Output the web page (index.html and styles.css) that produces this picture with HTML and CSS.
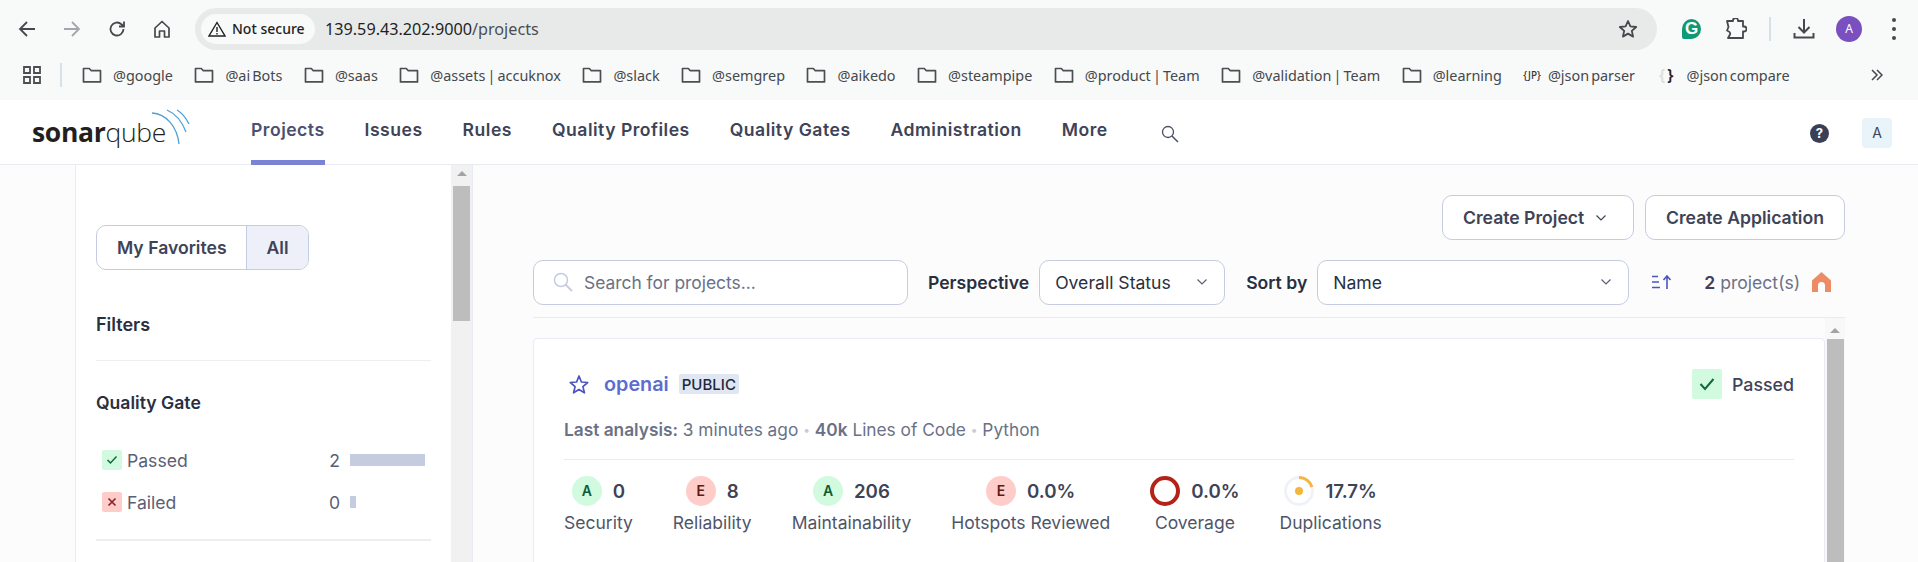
FILE: index.html
```html
<!DOCTYPE html>
<html lang="en">
<head>
    <meta charset="UTF-8">
    <meta name="viewport" content="width=device-width, initial-scale=1.0">
    <link rel="stylesheet" href="styles.css">
    <title>Projects - SonarQube</title>
</head>
<body>
<svg class="defs" width="0" height="0">
    <symbol id="folder" viewBox="0 0 20 18"><path d="M1.5 2.5h5.8l2 2.2h9.2v11.2h-17z" fill="none" stroke="#4b4e52" stroke-width="1.7" stroke-linejoin="round"/></symbol>
    <symbol id="chev" viewBox="0 0 12 8"><path d="M1.5 1.5L6 6l4.500-4.500" fill="none" stroke="currentColor" stroke-width="1.200"/></symbol>
</svg>

<!-- browser toolbar -->
<div class="browser-bar">
    <svg class="tb-icon first" viewBox="0 0 18 18"><path d="M17 9H2M9 2L2 9l7 7" fill="none" stroke="#45484c" stroke-width="1.8"/></svg>
    <svg class="tb-icon" viewBox="0 0 18 18"><path d="M1 9h15M9 2l7 7-7 7" fill="none" stroke="#a4a7aa" stroke-width="1.8"/></svg>
    <svg class="tb-icon" viewBox="0 0 18 18"><path d="M15.500 9a6.500 6.500 0 1 1-2-4.700L16 6.500M16 1.500v5h-5" fill="none" stroke="#45484c" stroke-width="1.8"/></svg>
    <svg class="tb-icon" viewBox="0 0 18 18"><path d="M2 8l7-6.500L16 8v9h-4.500v-6h-5v6H2z" fill="none" stroke="#45484c" stroke-width="1.700" stroke-linejoin="round"/></svg>
    <div class="omnibox">
        <div class="not-secure">
            <svg width="18" height="16" viewBox="0 0 18 16"><path d="M9 1.500L17 15H1zM9 6v5M9 12v1.500" fill="none" stroke="#222" stroke-width="1.400"/></svg>
            <span>Not secure</span>
        </div>
        <span class="url">139.59.43.202:9000<span class="url-path">/projects</span></span>
        <svg class="star" width="20" height="20" viewBox="0 0 20 20"><path d="M10 2l2.400 5.400 5.800.6-4.400 3.900 1.300 5.700L10 14.600l-5.100 3 1.300-5.700L1.800 8l5.800-.6z" fill="none" stroke="#45484c" stroke-width="1.800" stroke-linejoin="round"/></svg>
    </div>
    <span class="grammarly">G</span>
    <svg class="puzzle" width="22" height="22" viewBox="0 0 22 22"><path d="M2 3h6V2.500a2.500 2.500 0 0 1 5 0V3h5v5.500h1a2.500 2.500 0 0 1 0 5h-1V20H3l2-3.500c.8-2-.8-3-2-3.500l-1-.5L3.500 9z" fill="none" stroke="#45484c" stroke-width="1.800" stroke-linejoin="round"/></svg>
    <span class="tb-sep"></span>
    <svg class="download" width="22" height="22" viewBox="0 0 22 22"><path d="M11 1v13M5.500 9l5.500 5.500L16.500 9M1.500 15v4.500h19V15" fill="none" stroke="#45484c" stroke-width="2"/></svg>
    <span class="profile">A</span>
    <span class="dots"><i></i><i></i><i></i></span>
</div>

<!-- bookmarks -->
<div class="bookmarks">
    <svg class="apps" width="18" height="18" viewBox="0 0 18 18"><path d="M1 1h6v6H1zM11 1h6v6h-6zM1 11h6v6H1zM11 11h6v6h-6z" fill="none" stroke="#4b4e52" stroke-width="1.800"/></svg>
    <span class="bm-sep"></span>
    <a class="bm"><svg class="folder"><use href="#folder"/></svg>@google</a>
    <a class="bm"><svg class="folder"><use href="#folder"/></svg>@ai Bots</a>
    <a class="bm"><svg class="folder"><use href="#folder"/></svg>@saas</a>
    <a class="bm"><svg class="folder"><use href="#folder"/></svg>@assets | accuknox</a>
    <a class="bm"><svg class="folder"><use href="#folder"/></svg>@slack</a>
    <a class="bm"><svg class="folder"><use href="#folder"/></svg>@semgrep</a>
    <a class="bm"><svg class="folder"><use href="#folder"/></svg>@aikedo</a>
    <a class="bm"><svg class="folder"><use href="#folder"/></svg>@steampipe</a>
    <a class="bm"><svg class="folder"><use href="#folder"/></svg>@product | Team</a>
    <a class="bm"><svg class="folder"><use href="#folder"/></svg>@validation | Team</a>
    <a class="bm"><svg class="folder"><use href="#folder"/></svg>@learning</a>
    <a class="bm bm-json"><span class="jp">{JP}</span>@json parser</a>
    <a class="bm bm-json"><span class="brace"><i>{</i>}</span>@json compare</a>
    <svg class="more-bm" width="12" height="12" viewBox="0 0 12 12"><path d="M1 1l5 5-5 5M6 1l5 5-5 5" fill="none" stroke="#45484c" stroke-width="1.500"/></svg>
</div>

<!-- sonarqube header -->
<header class="top-nav">
    <div class="logo">
        <span class="logo-text"><b>sonar</b>qube</span>
        <svg class="logo-waves" width="40" height="42" viewBox="0 0 40 42"><path d="M2 4c14 1 25 13 27 31M17 1c9 4 15 11 19 22M27 1c5 3 9 8 12 14" fill="none" stroke="#4f9fd6" stroke-width="1.300"/></svg>
    </div>
    <nav class="nav-links">
        <a class="active">Projects</a>
        <a>Issues</a>
        <a>Rules</a>
        <a>Quality Profiles</a>
        <a>Quality Gates</a>
        <a>Administration</a>
        <a>More</a>
    </nav>
    <svg class="nav-search" width="18" height="18" viewBox="0 0 18 18"><circle cx="7" cy="7" r="5.500" fill="none" stroke="#4a4f63" stroke-width="1.300"/><path d="M11 11l6 6" stroke="#4a4f63" stroke-width="1.500"/></svg>
    <span class="help">?</span>
    <span class="user-box">A</span>
</header>

<div class="page">
    <aside class="sidebar">
        <div class="side-inner">
            <div class="toggle"><span>My Favorites</span><span class="on">All</span></div>
            <h2 class="filters">Filters</h2>
            <section class="facet">
                <h3>Quality Gate</h3>
                <div class="facet-row">
                    <span class="mini ok"><svg width="12" height="10" viewBox="0 0 12 10"><path d="M1.500 5l3 3 6-6.500" fill="none" stroke="#0e6b3c" stroke-width="1.500"/></svg></span>
                    <span class="facet-name">Passed</span>
                    <span class="facet-num">2</span>
                    <span class="facet-bar"><i class="full"></i></span>
                </div>
                <div class="facet-row">
                    <span class="mini bad"><svg width="10" height="10" viewBox="0 0 10 10"><path d="M1.500 1.500l7 7M8.500 1.500l-7 7" fill="none" stroke="#8b1e1e" stroke-width="1.600"/></svg></span>
                    <span class="facet-name">Failed</span>
                    <span class="facet-num">0</span>
                    <span class="facet-bar"><i class="tiny"></i></span>
                </div>
            </section>
        </div>
        <div class="scrollbar">
            <span class="arrow"></span>
            <span class="thumb"></span>
        </div>
    </aside>

    <main class="main">
        <div class="actions">
            <button class="btn btn-project">Create Project <svg class="chev"><use href="#chev"/></svg></button>
            <button class="btn">Create Application</button>
        </div>
        <div class="toolbar">
            <div class="search-box">
                <svg width="20" height="20" viewBox="0 0 20 20"><circle cx="8" cy="8" r="6.500" fill="none" stroke="#c5cce0" stroke-width="1.500"/><path d="M12.500 12.500l6.500 6.500" stroke="#c5cce0" stroke-width="1.800"/></svg>
                <span>Search for projects...</span>
            </div>
            <label class="tool-label persp">Perspective</label>
            <div class="select sel-persp">Overall Status <svg class="chev"><use href="#chev"/></svg></div>
            <label class="tool-label sort">Sort by</label>
            <div class="select sel-sort">Name <svg class="chev"><use href="#chev"/></svg></div>
            <svg class="sort-icon" width="21" height="14" viewBox="0 0 21 14"><path d="M0 1.500h6M0 7h7M0 12.500h8" stroke="#4b55c0" stroke-width="1.500"/><path d="M15 14V1.500M11.500 5L15 1l3.500 4" fill="none" stroke="#4b55c0" stroke-width="1.600"/></svg>
            <span class="count"><b>2</b> project(s)</span>
            <svg class="home" width="19" height="20" viewBox="0 0 19 20"><path d="M9.500 0L19 8.500V20h-6v-6.500a3.500 3.500 0 0 0-7 0V20H0V8.500z" fill="#ed8c64"/></svg>
        </div>

        <div class="list">
            <article class="card">
                <div class="card-head">
                    <svg class="fav" width="20" height="21" viewBox="0 0 20 21"><path d="M10 2l2.400 6 6.300.5-4.800 4.100 1.500 6.200L10 15.500l-5.400 3.300 1.500-6.200L1.300 8.500 7.600 8z" fill="none" stroke="#4b55c0" stroke-width="1.700" stroke-linejoin="round"/></svg>
                    <a class="proj-name">openai</a>
                    <span class="tag">PUBLIC</span>
                    <span class="gate"><span class="gate-box"><svg width="16" height="14" viewBox="0 0 16 14"><path d="M1.500 7l4.500 5 8.500-10" fill="none" stroke="#0e6b3c" stroke-width="2"/></svg></span>Passed</span>
                </div>
                <p class="meta"><b>Last analysis:</b> 3 minutes ago <i>•</i> <b>40k</b> Lines of Code <i>•</i> Python</p>
                <div class="metrics">
                    <div class="metric">
                        <div class="metric-top"><span class="rate a">A</span><span class="val">0</span></div>
                        <div class="metric-label">Security</div>
                    </div>
                    <div class="metric">
                        <div class="metric-top"><span class="rate e">E</span><span class="val">8</span></div>
                        <div class="metric-label">Reliability</div>
                    </div>
                    <div class="metric">
                        <div class="metric-top"><span class="rate a">A</span><span class="val">206</span></div>
                        <div class="metric-label">Maintainability</div>
                    </div>
                    <div class="metric">
                        <div class="metric-top"><span class="rate e">E</span><span class="val">0.0%</span></div>
                        <div class="metric-label">Hotspots Reviewed</div>
                    </div>
                    <div class="metric">
                        <div class="metric-top"><span class="rate cov"></span><span class="val">0.0%</span></div>
                        <div class="metric-label">Coverage</div>
                    </div>
                    <div class="metric">
                        <div class="metric-top">
                            <svg class="dup" width="30" height="30" viewBox="0 0 30 30"><circle cx="15" cy="15" r="13.500" fill="none" stroke="#eff2f9" stroke-width="3"/><path d="M15 1.500A13.500 13.500 0 0 1 28 11" fill="none" stroke="#f4b63f" stroke-width="3"/><circle cx="15" cy="15" r="4" fill="#f4b63f"/></svg>
                            <span class="val">17.7%</span>
                        </div>
                        <div class="metric-label">Duplications</div>
                    </div>
                </div>
            </article>
            <div class="scrollbar list-scroll">
                <span class="arrow"></span>
                <span class="thumb"></span>
            </div>
        </div>
    </main>
</div>
</body>
</html>
```

FILE: styles.css
```css
* {box-sizing: border-box;}
html, body {height: 100%; margin: 0; overflow: hidden;}
body {background: #fcfcfd; font-family: "Inter", "Liberation Sans", sans-serif; color: #3e4357; display: flex; flex-direction: column;}
.defs {position: absolute;}

/* =========== browser =========== */
.browser-bar {height: 57px; background: #f8f9f9; display: flex; align-items: center; flex: none; padding-top: 0; font-family: "Noto Sans", sans-serif;}
.tb-icon {width: 18px; height: 18px; margin-right: 27px; flex: none;}
.tb-icon.first {margin-left: 18px;}
.tb-icon:nth-of-type(4) {margin-right: 24px;}
.omnibox {width: 1462px; height: 42px; background: #e8eaea; border-radius: 21px; display: flex; align-items: center; padding: 0 19px 0 6px; flex: none; margin-top: 0;}
.not-secure {width: 114px; height: 30px; background: #f8f9f9; border-radius: 15px; display: flex; align-items: center; gap: 6px; padding-left: 7px; font-size: 14px; font-weight: 500; color: #1f1f1f;}
.url {margin-left: 10px; font-size: 16.200px; color: #1f1f1f;}
.url-path {color: #4b4e52;}
.star {margin-left: auto;}
.grammarly {width: 19px; height: 20px; margin-left: 25px; border-radius: 50% 50% 50% 2px; background: #0f9a76; color: #fff; font: 700 17px/20px "Liberation Sans", sans-serif; text-align: center; flex: none;}
.puzzle {margin-left: 24px; flex: none;}
.tb-sep {width: 2px; height: 24px; background: #d5e3e8; margin-left: 22px; flex: none;}
.download {margin-left: 22px; flex: none;}
.profile {width: 26px; height: 26px; margin-left: 21px; border-radius: 50%; background: #7a4fc0; color: #fff; font-size: 12px; line-height: 26px; text-align: center; flex: none;}
.dots {display: flex; flex-direction: column; gap: 5px; margin-left: 30px;}
.dots i {width: 4px; height: 4px; border-radius: 50%; background: #45484c;}

.bookmarks {height: 43px; background: #f8f9f9; display: flex; align-items: center; flex: none; font-family: "Noto Sans", sans-serif; font-size: 14.400px; word-spacing: -1.600px; color: #45484c; padding-bottom: 7px; position: relative;}
.apps {margin-left: 23px; flex: none;}
.bm-sep {width: 2px; height: 24px; background: #d5e3e8; margin: 0 20px 0 19px; flex: none;}
.bm {display: flex; align-items: center; margin-right: 21.500px; white-space: nowrap;}
.folder {width: 20px; height: 18px; margin-right: 11px; flex: none;}
.bm-json {margin-right: 24px;}
.jp {font-size: 10px; font-weight: 500; margin-right: 7px; color: #333;}
.brace {font-size: 16px; margin-right: 11px; color: #222; font-weight: 600; letter-spacing: 2px;}
.brace i {font-style: normal; color: #ddd;}
.more-bm {margin-left: auto; margin-right: 35px;}

/* =========== header =========== */
.top-nav {height: 65px; background: #fff; border-bottom: 1px solid #e8ebef; display: flex; align-items: stretch; flex: none;}
.logo {width: 251px; padding-left: 32px; position: relative; flex: none;}
.logo-text {display: block; font-family: "Open Sans", sans-serif; font-size: 26.500px; font-weight: 300; color: #231f20; line-height: 30px; margin-top: 17px; letter-spacing: -0.3px;}
.logo-text b {font-weight: 700;}
.logo-waves {position: absolute; left: 150px; top: 9px;}
.nav-links {display: flex; gap: 40px;}
.nav-links a {font-size: 17.600px; letter-spacing: .49px; font-weight: 600; line-height: 60px; height: 65px; color: #3e4357; border-bottom: 5px solid transparent; white-space: nowrap;}
.nav-links a.active {color: #4b4f70; border-bottom-color: #7a83d4;}
.nav-search {margin: 25px 0 0 53px; flex: none;}
.help {width: 19px; height: 19px; border-radius: 50%; background: #3a3f56; color: #fff; font-size: 13px; font-weight: 700; line-height: 19px; text-align: center; margin: 24px 0 0 auto; flex: none;}
.user-box {width: 30px; height: 30px; border-radius: 4px; background: #e9f3fa; color: #3e4357; font-size: 14px; line-height: 30px; text-align: center; margin: 18px 26px 0 33px; flex: none;}

/* =========== layout =========== */
.page {flex: 1; display: flex; min-height: 0;}
.sidebar {width: 398px; margin-left: 75px; background: #fff; border-left: 1px solid #e8ebf5; border-right: 1px solid #e8ebf5; display: flex; flex: none;}
.side-inner {flex: 1; padding: 60px 20px 0;}
.scrollbar {width: 21px; background: #f1f1f1; position: relative; flex: none; display: flex; flex-direction: column; align-items: center;}
.arrow {width: 0; height: 0; border: 5px solid transparent; border-top: 0; border-bottom: 5px solid #a3a3a3; margin: 6px 0 10px;}
.thumb {width: 17px; height: 135px; background: #bdbdbd; flex: none;}

/* sidebar */
.toggle {display: inline-flex; height: 45px; border: 1px solid #c5cce0; border-radius: 10px; font-size: 17.600px; font-weight: 600; line-height: 43px; overflow: hidden;}
.toggle span {padding: 0 19px 0 20px;}
.toggle .on {background: #eef0f9; border-left: 1px solid #c5cce0;}
.filters {font-size: 18px; font-weight: 600; line-height: 24px; margin: 43px 0 0; padding-bottom: 23px; color: #2a2f40; border-bottom: 1px solid #eceef0;}
.facet {padding-bottom: 27px; border-bottom: 2px solid #eceef0;}
.facet h3 {font-size: 17.600px; font-weight: 600; line-height: 24px; margin: 30px 0 35px; color: #2a2f40;}
.facet-row {display: flex; align-items: center; height: 20px; margin: 0 0 22px 6px; font-size: 17.600px; color: #5a6075;}
.facet-row:last-child {margin-bottom: 0;}
.mini {width: 20px; height: 20px; border-radius: 2px; display: flex; align-items: center; justify-content: center; flex: none;}
.mini.ok {background: #d1fadf;}
.mini.bad {background: #fecdca;}
.facet-name {margin-left: 5px;}
.facet-num {margin-left: auto; font-size: 17.600px;}
.facet-bar {width: 75px; margin: 0 6px 0 10px; display: block;}
.facet-bar i {display: block; height: 12px; background: #c5cce0;}
.facet-bar .full {width: 75px;}
.facet-bar .tiny {width: 6px;}

/* main column */
.main {flex: 1; min-width: 0; padding: 30px 73px 0 60px; display: flex; flex-direction: column;}
.actions {display: flex; justify-content: flex-end; gap: 11px;}
.btn {height: 45px; width: 200px; justify-content: center; background: #fff; border: 1px solid #c5cce0; border-radius: 10px; font: 600 17.600px "Inter", sans-serif; color: #3e4357; display: flex; align-items: center; gap: 11px; white-space: nowrap;}
.btn-project {width: 192px; justify-content: flex-start; padding-left: 20px;}
.chev {width: 12px; height: 8px; flex: none;}
.toolbar {display: flex; align-items: center; margin-top: 20px; height: 58px; padding-bottom: 13px; border-bottom: 1px solid #e8ebf5; flex: none;}
.search-box {width: 375px; height: 45px; background: #fff; border: 1px solid #c5cce0; border-radius: 10px; display: flex; align-items: center; gap: 11px; padding-left: 19px; font-size: 17.400px; color: #6a7187; flex: none;}
.tool-label {font-size: 17.600px; font-weight: 600; color: #2a2f40; white-space: nowrap;}
.persp {margin-left: 20px;}
.sort {margin-left: 21px;}
.select {height: 45px; margin-left: 10px; background: #fff; border: 1px solid #c5cce0; border-radius: 10px; display: flex; align-items: center; justify-content: space-between; padding: 0 16px 0 15px; font-size: 17.600px; color: #2a2f40; flex: none;}
.select .chev {color: #5a6075;}
.sel-persp {width: 186px;}
.sel-sort {width: 312px;}
.sort-icon {margin-left: 23px; flex: none;}
.count {margin-left: 31px; font-size: 17.600px; color: #6a7187; white-space: nowrap;}
.count b {font-weight: 600; color: #3e4357;}
.home {margin-left: 12px; flex: none;}

.list {display: flex; flex: 1; min-height: 0;}
.card {flex: 1; height: 400px; margin-top: 20px; padding: 30px 30px 0; background: #fff; border: 1px solid #e8ebf5; border-radius: 4px;}
.list-scroll {width: 20px; background: #f8f8f8;}
.list-scroll .arrow {margin: 10px 0 6px;}
.list-scroll .thumb {height: 300px;}

/* card */
.card-head {display: flex; align-items: center; height: 30px;}
.fav {margin-left: 5px; flex: none;}
.proj-name {margin-left: 15px; font-size: 19.800px; font-weight: 600; color: #5d6cd0;}
.tag {margin-left: 10px; height: 20px; padding: 0 3px; background: #e1e6f3; border-radius: 2px; font-size: 15px; font-weight: 500; line-height: 21px; color: #22263a;}
.gate {margin-left: auto; display: flex; align-items: center; gap: 10px; font-size: 17.800px; font-weight: 500;}
.gate-box {width: 30px; height: 30px; background: #d1fadf; border-radius: 2px; display: flex; align-items: center; justify-content: center;}
.meta {margin: 21px 0 0; padding-bottom: 19px; font-size: 17.300px; line-height: 20px; color: #6a7187; border-bottom: 1px solid #e8ebf5;}
.meta b {font-weight: 600;}
.meta i {font-style: normal; color: #c5cce0; font-size: 12px; line-height: 0; vertical-align: 2px;}
.metrics {display: flex; gap: 40px; padding-top: 16px;}
.metric {display: flex; flex-direction: column; align-items: center;}
.metric-top {display: flex; align-items: center; gap: 11px; height: 30px;}
.rate {width: 30px; height: 30px; border-radius: 50%; font-size: 14px; font-weight: 600; line-height: 30px; text-align: center; flex: none;}
.rate.a {background: #d1fadf; color: #0e5c33;}
.rate.e {background: #fecdca; color: #5c1a14;}
.rate.cov {border: 4px solid #b42318;}
.dup {flex: none;}
.val {font-size: 18.700px; font-weight: 600; color: #3e4357;}
.metric-label {margin-top: 7px; font-size: 17.500px; line-height: 20px; color: #4f5569; white-space: nowrap;}
```
